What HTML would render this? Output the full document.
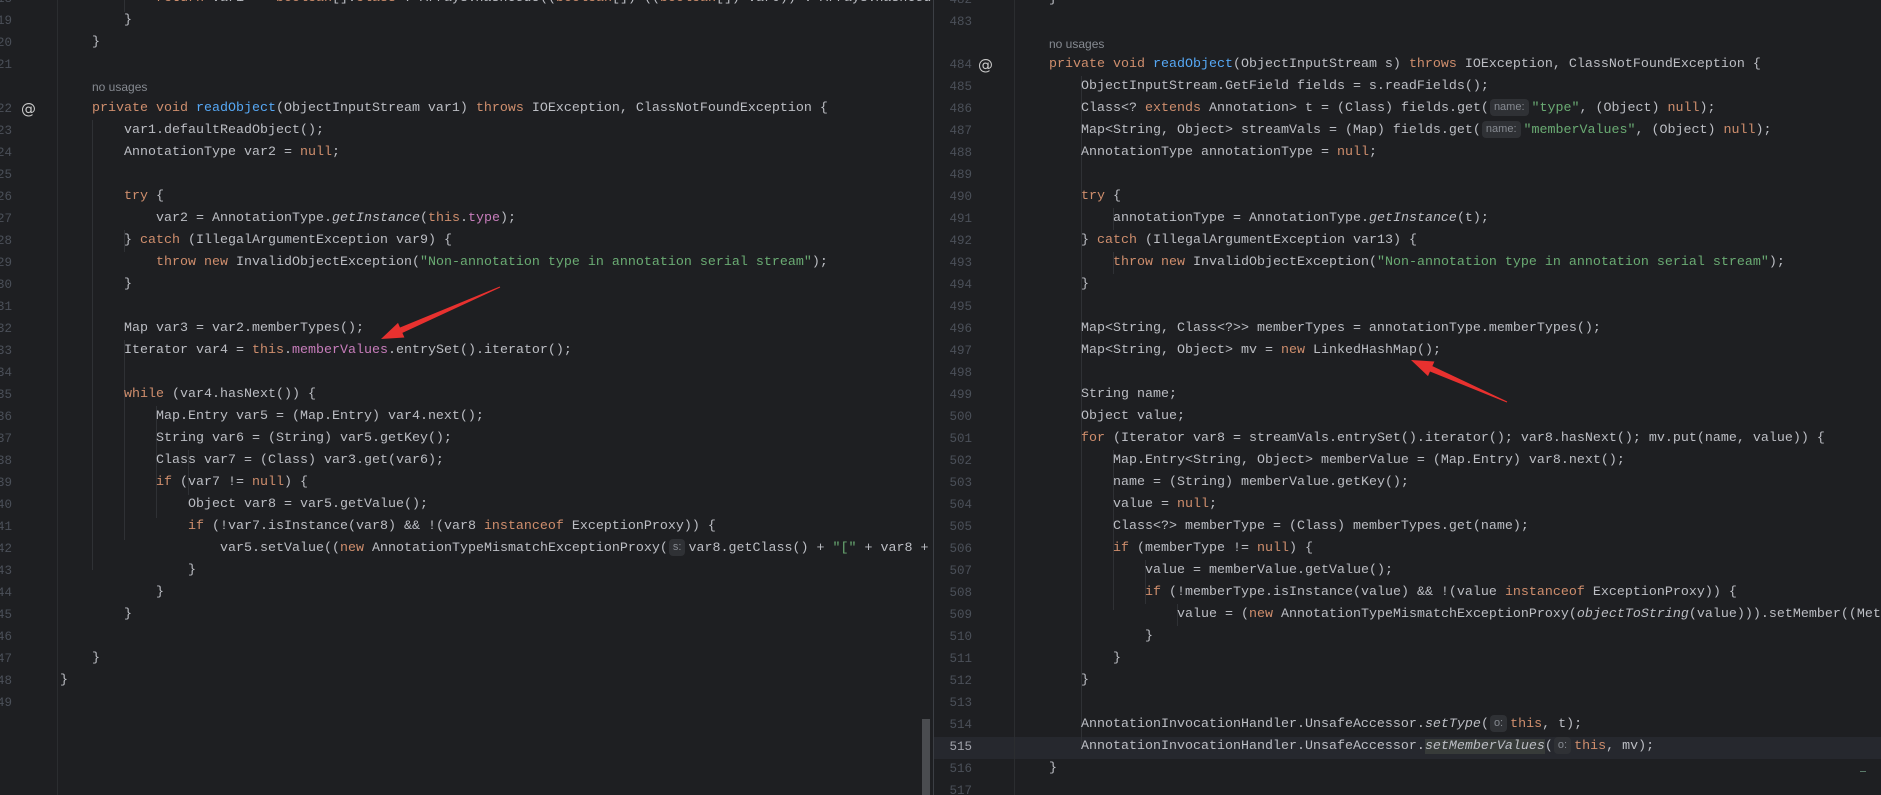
<!DOCTYPE html>
<html><head><meta charset="utf-8"><style>
html,body{margin:0;padding:0;background:#1e1f22;width:1881px;height:795px;overflow:hidden;position:relative}
.pane{position:absolute;top:0;height:795px;overflow:hidden}
.l{position:absolute;height:22px;line-height:22px;white-space:pre;font-family:"Liberation Mono",monospace;font-size:13.33px;color:#bcbec4}
.n{position:absolute;height:22px;line-height:22px;width:40px;text-align:right;font-family:"Liberation Mono",monospace;font-size:12.5px;color:#4b5059}
.u{position:absolute;height:22px;line-height:22px;font-family:"Liberation Sans",sans-serif;font-size:12px;color:#868a91}
.k{color:#cf8e6d}.m{color:#56a8f5}.f{color:#c77dbb}.s{color:#6aab73}.i{font-style:italic}
.h{display:inline-block;background:#2f3135;color:#868a91;font-family:"Liberation Sans",sans-serif;font-size:11px;line-height:17px;height:17px;padding:0 4px;border-radius:4px;margin:0 3px 0 1px;vertical-align:1px}
.g{position:absolute;width:1px;background:#2f3135}
.at{position:absolute;font-family:"DejaVu Sans",sans-serif;font-size:15px;color:#c8c8c8;line-height:22px;height:22px}
</style></head><body>

<!-- LEFT PANE -->
<div class="pane" style="left:0;width:933px">
<div class="g" style="left:57px;top:0;height:795px;background:#2b2d30"></div>
<div class="g" style="left:92px;top:120px;height:450px"></div>
<div class="g" style="left:124px;top:0;height:12px"></div>
<div class="g" style="left:124px;top:230px;height:22px"></div>
<div class="g" style="left:124px;top:340px;height:200px"></div>
<div class="g" style="left:156px;top:406px;height:112px"></div>
<div class="g" style="left:188px;top:450px;height:45px"></div>

<div class="n" style="left:-28px;top:-12px">18</div>
<div class="n" style="left:-28px;top:10px">19</div>
<div class="n" style="left:-28px;top:32px">20</div>
<div class="n" style="left:-28px;top:54px">21</div>
<div class="n" style="left:-28px;top:98px">22</div>
<div class="n" style="left:-28px;top:120px">23</div>
<div class="n" style="left:-28px;top:142px">24</div>
<div class="n" style="left:-28px;top:164px">25</div>
<div class="n" style="left:-28px;top:186px">26</div>
<div class="n" style="left:-28px;top:208px">27</div>
<div class="n" style="left:-28px;top:230px">28</div>
<div class="n" style="left:-28px;top:252px">29</div>
<div class="n" style="left:-28px;top:274px">30</div>
<div class="n" style="left:-28px;top:296px">31</div>
<div class="n" style="left:-28px;top:318px">32</div>
<div class="n" style="left:-28px;top:340px">33</div>
<div class="n" style="left:-28px;top:362px">34</div>
<div class="n" style="left:-28px;top:384px">35</div>
<div class="n" style="left:-28px;top:406px">36</div>
<div class="n" style="left:-28px;top:428px">37</div>
<div class="n" style="left:-28px;top:450px">38</div>
<div class="n" style="left:-28px;top:472px">39</div>
<div class="n" style="left:-28px;top:494px">40</div>
<div class="n" style="left:-28px;top:516px">41</div>
<div class="n" style="left:-28px;top:538px">42</div>
<div class="n" style="left:-28px;top:560px">43</div>
<div class="n" style="left:-28px;top:582px">44</div>
<div class="n" style="left:-28px;top:604px">45</div>
<div class="n" style="left:-28px;top:626px">46</div>
<div class="n" style="left:-28px;top:648px">47</div>
<div class="n" style="left:-28px;top:670px">48</div>
<div class="n" style="left:-28px;top:692px">49</div>
<div class="at" style="left:21px;top:98px">@</div>

<div class="l" style="left:156px;top:-12px"><span class="k">return</span> var1 == <span class="k">boolean</span>[].<span class="k">class</span> ? Arrays.<span class="i">hashCode</span>((<span class="k">boolean</span>[]) ((<span class="k">boolean</span>[]) var0)) : Arrays.<span class="i">hashCode</span></div>
<div class="l" style="left:124px;top:10px">}</div>
<div class="l" style="left:92px;top:32px">}</div>
<div class="u" style="left:92px;top:76px">no usages</div>
<div class="l" style="left:92px;top:98px"><span class="k">private void</span> <span class="m">readObject</span>(ObjectInputStream var1) <span class="k">throws</span> IOException, ClassNotFoundException {</div>
<div class="l" style="left:124px;top:120px">var1.defaultReadObject();</div>
<div class="l" style="left:124px;top:142px">AnnotationType var2 = <span class="k">null</span>;</div>
<div class="l" style="left:124px;top:186px"><span class="k">try</span> {</div>
<div class="l" style="left:156px;top:208px">var2 = AnnotationType.<span class="i">getInstance</span>(<span class="k">this</span>.<span class="f">type</span>);</div>
<div class="l" style="left:124px;top:230px">} <span class="k">catch</span> (IllegalArgumentException var9) {</div>
<div class="l" style="left:156px;top:252px"><span class="k">throw new</span> InvalidObjectException(<span class="s">"Non-annotation type in annotation serial stream"</span>);</div>
<div class="l" style="left:124px;top:274px">}</div>
<div class="l" style="left:124px;top:318px">Map var3 = var2.memberTypes();</div>
<div class="l" style="left:124px;top:340px">Iterator var4 = <span class="k">this</span>.<span class="f">memberValues</span>.entrySet().iterator();</div>
<div class="l" style="left:124px;top:384px"><span class="k">while</span> (var4.hasNext()) {</div>
<div class="l" style="left:156px;top:406px">Map.Entry var5 = (Map.Entry) var4.next();</div>
<div class="l" style="left:156px;top:428px">String var6 = (String) var5.getKey();</div>
<div class="l" style="left:156px;top:450px">Class var7 = (Class) var3.get(var6);</div>
<div class="l" style="left:156px;top:472px"><span class="k">if</span> (var7 != <span class="k">null</span>) {</div>
<div class="l" style="left:188px;top:494px">Object var8 = var5.getValue();</div>
<div class="l" style="left:188px;top:516px"><span class="k">if</span> (!var7.isInstance(var8) &amp;&amp; !(var8 <span class="k">instanceof</span> ExceptionProxy)) {</div>
<div class="l" style="left:220px;top:538px">var5.setValue((<span class="k">new</span> AnnotationTypeMismatchExceptionProxy(<span class="h">s:</span>var8.getClass() + <span class="s">"["</span> + var8 + <span class="s">"]"</span>)).setMember(</div>
<div class="l" style="left:188px;top:560px">}</div>
<div class="l" style="left:156px;top:582px">}</div>
<div class="l" style="left:124px;top:604px">}</div>
<div class="l" style="left:92px;top:648px">}</div>
<div class="l" style="left:60px;top:670px">}</div>
<div style="position:absolute;left:922px;top:719px;width:8px;height:76px;background:#4a4c50"></div>
</div>
<div style="position:absolute;left:933px;top:0;width:1px;height:795px;background:#3c3f45"></div>

<!-- RIGHT PANE -->
<div class="pane" style="left:934px;width:947px">
<div style="position:absolute;left:0;top:737px;width:947px;height:22px;background:#26282e"></div>
<div class="g" style="left:80px;top:0;height:795px;background:#2b2d30"></div>
<div class="g" style="left:147px;top:76px;height:670px"></div>
<div class="g" style="left:179px;top:208px;height:22px"></div>
<div class="g" style="left:179px;top:252px;height:22px"></div>
<div class="g" style="left:179px;top:450px;height:160px"></div>
<div class="g" style="left:211px;top:560px;height:44px"></div>
<div class="g" style="left:243px;top:604px;height:22px"></div>
</div>
<div class="pane" style="left:934px;width:947px">
<div class="n" style="left:-2px;top:-11px">482</div>
<div class="n" style="left:-2px;top:11px">483</div>
<div class="n" style="left:-2px;top:54px">484</div>
<div class="n" style="left:-2px;top:76px">485</div>
<div class="n" style="left:-2px;top:98px">486</div>
<div class="n" style="left:-2px;top:120px">487</div>
<div class="n" style="left:-2px;top:142px">488</div>
<div class="n" style="left:-2px;top:164px">489</div>
<div class="n" style="left:-2px;top:186px">490</div>
<div class="n" style="left:-2px;top:208px">491</div>
<div class="n" style="left:-2px;top:230px">492</div>
<div class="n" style="left:-2px;top:252px">493</div>
<div class="n" style="left:-2px;top:274px">494</div>
<div class="n" style="left:-2px;top:296px">495</div>
<div class="n" style="left:-2px;top:318px">496</div>
<div class="n" style="left:-2px;top:340px">497</div>
<div class="n" style="left:-2px;top:362px">498</div>
<div class="n" style="left:-2px;top:384px">499</div>
<div class="n" style="left:-2px;top:406px">500</div>
<div class="n" style="left:-2px;top:428px">501</div>
<div class="n" style="left:-2px;top:450px">502</div>
<div class="n" style="left:-2px;top:472px">503</div>
<div class="n" style="left:-2px;top:494px">504</div>
<div class="n" style="left:-2px;top:516px">505</div>
<div class="n" style="left:-2px;top:538px">506</div>
<div class="n" style="left:-2px;top:560px">507</div>
<div class="n" style="left:-2px;top:582px">508</div>
<div class="n" style="left:-2px;top:604px">509</div>
<div class="n" style="left:-2px;top:626px">510</div>
<div class="n" style="left:-2px;top:648px">511</div>
<div class="n" style="left:-2px;top:670px">512</div>
<div class="n" style="left:-2px;top:692px">513</div>
<div class="n" style="left:-2px;top:714px">514</div>
<div class="n" style="left:-2px;top:736px;color:#a1a3ab">515</div>
<div class="n" style="left:-2px;top:758px">516</div>
<div class="n" style="left:-2px;top:780px">517</div>
<div class="at" style="left:44px;top:54px">@</div>

<div class="l" style="left:115px;top:-11px">}</div>
<div class="u" style="left:115px;top:33px">no usages</div>
<div class="l" style="left:115px;top:54px"><span class="k">private void</span> <span class="m">readObject</span>(ObjectInputStream s) <span class="k">throws</span> IOException, ClassNotFoundException {</div>
<div class="l" style="left:147px;top:76px">ObjectInputStream.GetField fields = s.readFields();</div>
<div class="l" style="left:147px;top:98px">Class&lt;? <span class="k">extends</span> Annotation&gt; t = (Class) fields.get(<span class="h">name:</span><span class="s">"type"</span>, (Object) <span class="k">null</span>);</div>
<div class="l" style="left:147px;top:120px">Map&lt;String, Object&gt; streamVals = (Map) fields.get(<span class="h">name:</span><span class="s">"memberValues"</span>, (Object) <span class="k">null</span>);</div>
<div class="l" style="left:147px;top:142px">AnnotationType annotationType = <span class="k">null</span>;</div>
<div class="l" style="left:147px;top:186px"><span class="k">try</span> {</div>
<div class="l" style="left:179px;top:208px">annotationType = AnnotationType.<span class="i">getInstance</span>(t);</div>
<div class="l" style="left:147px;top:230px">} <span class="k">catch</span> (IllegalArgumentException var13) {</div>
<div class="l" style="left:179px;top:252px"><span class="k">throw new</span> InvalidObjectException(<span class="s">"Non-annotation type in annotation serial stream"</span>);</div>
<div class="l" style="left:147px;top:274px">}</div>
<div class="l" style="left:147px;top:318px">Map&lt;String, Class&lt;?&gt;&gt; memberTypes = annotationType.memberTypes();</div>
<div class="l" style="left:147px;top:340px">Map&lt;String, Object&gt; mv = <span class="k">new</span> LinkedHashMap();</div>
<div class="l" style="left:147px;top:384px">String name;</div>
<div class="l" style="left:147px;top:406px">Object value;</div>
<div class="l" style="left:147px;top:428px"><span class="k">for</span> (Iterator var8 = streamVals.entrySet().iterator(); var8.hasNext(); mv.put(name, value)) {</div>
<div class="l" style="left:179px;top:450px">Map.Entry&lt;String, Object&gt; memberValue = (Map.Entry) var8.next();</div>
<div class="l" style="left:179px;top:472px">name = (String) memberValue.getKey();</div>
<div class="l" style="left:179px;top:494px">value = <span class="k">null</span>;</div>
<div class="l" style="left:179px;top:516px">Class&lt;?&gt; memberType = (Class) memberTypes.get(name);</div>
<div class="l" style="left:179px;top:538px"><span class="k">if</span> (memberType != <span class="k">null</span>) {</div>
<div class="l" style="left:211px;top:560px">value = memberValue.getValue();</div>
<div class="l" style="left:211px;top:582px"><span class="k">if</span> (!memberType.isInstance(value) &amp;&amp; !(value <span class="k">instanceof</span> ExceptionProxy)) {</div>
<div class="l" style="left:243px;top:604px">value = (<span class="k">new</span> AnnotationTypeMismatchExceptionProxy(<span class="i">objectToString</span>(value))).setMember((Method)</div>
<div class="l" style="left:211px;top:626px">}</div>
<div class="l" style="left:179px;top:648px">}</div>
<div class="l" style="left:147px;top:670px">}</div>
<div class="l" style="left:147px;top:714px">AnnotationInvocationHandler.UnsafeAccessor.<span class="i">setType</span>(<span class="h">o:</span><span class="k">this</span>, t);</div>
<div class="l" style="left:147px;top:736px">AnnotationInvocationHandler.UnsafeAccessor.<span class="i" style="background:#373b39">setMemberValues</span>(<span class="h">o:</span><span class="k">this</span>, mv);</div>
<div class="l" style="left:115px;top:758px">}</div>
<div style="position:absolute;left:926px;top:771px;width:6px;height:1px;background:#5a7a6a"></div>
</div>

<svg width="1881" height="795" style="position:absolute;left:0;top:0" xmlns="http://www.w3.org/2000/svg">
<polygon fill="#e8312f" points="500.2,287.5 402.4,332.9 404.4,337.5 381,339 398,322.9 400,327.5 499.8,286.5"/>
<polygon fill="#e8312f" points="1507.2,401.5 1432.4,366.1 1434.4,361.5 1411,360 1428,376.1 1430,371.5 1506.8,402.5"/>
</svg>
</body></html>
